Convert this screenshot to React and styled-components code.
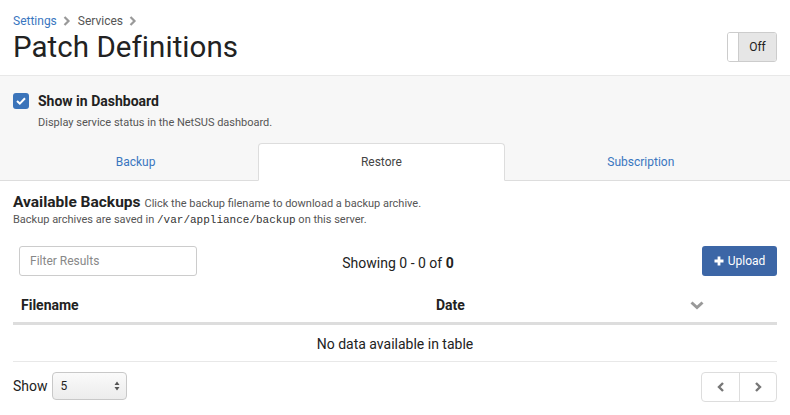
import React from "react";
import styled, { createGlobalStyle } from "styled-components";

const Global = createGlobalStyle`
  html, body { margin: 0; padding: 0; background: #fff; }
  body { font-family: Roboto, "Liberation Sans", Arial, sans-serif; color: #333; }
  * { box-sizing: border-box; }
`;

const Page = styled.div`
  width: 790px;
  height: 415px;
  overflow: hidden;
`;

const Header = styled.div`
  display: flex;
  align-items: flex-end;
  justify-content: space-between;
  padding: 14px 13px 11px 13px;
  height: 75px;
`;

const TitleBlock = styled.div`
  display: flex;
  flex-direction: column;
`;

const Crumbs = styled.div`
  display: flex;
  align-items: center;
  gap: 4px;
  font-size: 12px;
  line-height: 16px;
  color: #555;
`;

const CrumbLink = styled.span`
  color: ${(p) => (p.$link ? "#3a76bf" : "#555")};
`;

const Chev = styled.svg`
  width: 8px;
  height: 10px;
  margin: 0 3px 0 2px;
`;

const Title = styled.h1`
  margin: 1px 0 0 0;
  font-size: 29.5px;
  font-weight: 400;
  line-height: 34px;
  color: #222;
  letter-spacing: 0.05px;
`;

const Toggle = styled.div`
  display: flex;
  width: 50px;
  height: 30px;
  border: 1px solid #ccc;
  border-radius: 3px;
  overflow: hidden;
  margin-bottom: 2px;
`;

const ToggleKnob = styled.div`
  width: 11px;
  background: #fff;
  border-right: 1px solid #ccc;
`;

const ToggleLabel = styled.div`
  flex: 1;
  background: #e6e6e6;
  display: flex;
  align-items: center;
  justify-content: center;
  font-size: 12px;
  color: #222;
`;

const Panel = styled.div`
  background: #f7f7f7;
  border-top: 1px solid #e8e8e8;
  border-bottom: 1px solid #ddd;
  height: 106px;
  display: flex;
  flex-direction: column;
  justify-content: space-between;
`;

const Setting = styled.div`
  padding: 17px 13px 0 13px;
`;

const CheckRow = styled.div`
  display: flex;
  align-items: center;
  gap: 9px;
`;

const Check = styled.div`
  width: 16px;
  height: 16px;
  border-radius: 3px;
  background: #3b74ba;
  display: flex;
  align-items: center;
  justify-content: center;
`;

const CheckLabel = styled.span`
  font-size: 14px;
  font-weight: 700;
  color: #222;
`;

const Help = styled.div`
  margin: 7px 0 0 25px;
  font-size: 11px;
  color: #555;
`;

const Tabs = styled.div`
  display: flex;
  padding: 0 13px;
  margin-bottom: -1px;
`;

const Tab = styled.div`
  flex: 1 1 auto;
  height: 38px;
  display: flex;
  align-items: center;
  justify-content: center;
  font-size: 12px;
  padding: 0 15px;
  color: ${(p) => (p.$active ? "#444" : "#3a76bf")};
  background: ${(p) => (p.$active ? "#fff" : "transparent")};
  border: 1px solid ${(p) => (p.$active ? "#ddd" : "transparent")};
  border-bottom-color: ${(p) => (p.$active ? "#fff" : "transparent")};
  border-radius: 4px 4px 0 0;
`;

const Content = styled.div`
  padding: 13px 13px 0 13px;
`;

const Intro = styled.div`
  font-size: 11px;
  color: #555;
  line-height: 16px;
`;

const IntroTitle = styled.span`
  font-size: 15.5px;
  font-weight: 700;
  color: #222;
  margin-right: 4px;
`;

const Code = styled.code`
  font-family: "Liberation Mono", "DejaVu Sans Mono", monospace;
  font-size: 11px;
  color: #333;
`;

const Toolbar = styled.div`
  display: grid;
  grid-template-columns: 1fr auto 1fr;
  align-items: center;
  margin-top: 18px;
  padding-left: 6px;
`;

const Filter = styled.input`
  width: 178px;
  height: 30px;
  border: 1px solid #ccc;
  border-radius: 3px;
  padding: 0 10px;
  font-family: inherit;
  font-size: 12px;
  color: #333;
  &::placeholder { color: #888; }
`;

const Showing = styled.div`
  font-size: 14px;
  color: #222;
  padding-top: 3px;
`;

const UploadBtn = styled.button`
  justify-self: end;
  height: 30px;
  width: 75px;
  border: none;
  border-radius: 3px;
  background: #3c66a6;
  color: #fff;
  font-family: inherit;
  font-size: 12px;
  display: flex;
  align-items: center;
  justify-content: center;
  gap: 4px;
  padding: 0;
`;

const Table = styled.div`
  margin-top: 12px;
`;

const HeadRow = styled.div`
  display: flex;
  align-items: center;
  height: 37px;
  border-bottom: 3px solid #ddd;
  font-size: 14px;
  font-weight: 700;
  color: #222;
`;

const HeadCell = styled.div`
  width: ${(p) => p.$w};
  flex: ${(p) => (p.$grow ? 1 : "none")};
  padding: 0 8px;
  display: flex;
  align-items: center;
`;

const EmptyRow = styled.div`
  height: 37px;
  border-bottom: 1px solid #e8e8e8;
  display: flex;
  align-items: center;
  justify-content: center;
  font-size: 14px;
  color: #222;
  padding-top: 2px;
`;

const Footer = styled.div`
  display: flex;
  align-items: center;
  justify-content: space-between;
  margin-top: 8px;
`;

const ShowWrap = styled.div`
  display: flex;
  align-items: center;
  gap: 4px;
  font-size: 14px;
  color: #222;
`;

const Select = styled.div`
  width: 75px;
  height: 28px;
  border: 1px solid #c8c8c8;
  border-radius: 4px;
  background: linear-gradient(#fafafa, #ececec);
  display: flex;
  align-items: center;
  justify-content: space-between;
  padding: 0 6px 0 8px;
  font-size: 12px;
  color: #222;
`;

const Pager = styled.div`
  display: flex;
  border: 1px solid #ddd;
  border-radius: 4px;
  height: 30px;
  margin-top: 2px;
`;

const PageBtn = styled.div`
  width: 37px;
  display: flex;
  align-items: center;
  justify-content: center;
  & + & { border-left: 1px solid #ddd; }
`;

const ChevronRight = () => (
  <Chev viewBox="0 0 8 10">
    <path d="M1.5 1 L5.5 5 L1.5 9" fill="none" stroke="#999" strokeWidth="2.2" />
  </Chev>
);

export default function App() {
  return (
    <Page>
      <Global />
      <Header>
        <TitleBlock>
          <Crumbs>
            <CrumbLink $link>Settings</CrumbLink>
            <ChevronRight />
            <CrumbLink>Services</CrumbLink>
            <ChevronRight />
          </Crumbs>
          <Title>Patch Definitions</Title>
        </TitleBlock>
        <Toggle>
          <ToggleKnob />
          <ToggleLabel>Off</ToggleLabel>
        </Toggle>
      </Header>
      <Panel>
        <Setting>
          <CheckRow>
            <Check>
              <svg width="10" height="8" viewBox="0 0 10 8">
                <path d="M1 4 L3.8 6.6 L9 1.2" fill="none" stroke="#fff" strokeWidth="2" />
              </svg>
            </Check>
            <CheckLabel>Show in Dashboard</CheckLabel>
          </CheckRow>
          <Help>Display service status in the NetSUS dashboard.</Help>
        </Setting>
        <Tabs>
          <Tab>Backup</Tab>
          <Tab $active>Restore</Tab>
          <Tab>Subscription</Tab>
        </Tabs>
      </Panel>
      <Content>
        <Intro>
          <IntroTitle>Available Backups</IntroTitle>
          Click the backup filename to download a backup archive.
          <br />
          Backup archives are saved in <Code>/var/appliance/backup</Code> on this server.
        </Intro>
        <Toolbar>
          <Filter placeholder="Filter Results" />
          <Showing>
            Showing 0 - 0 of <b>0</b>
          </Showing>
          <UploadBtn>
            <svg width="10" height="10" viewBox="0 0 10 10">
              <path d="M5 0.5 V9.5 M0.5 5 H9.5" stroke="#fff" strokeWidth="2.8" />
            </svg>
            Upload
          </UploadBtn>
        </Toolbar>
        <Table>
          <HeadRow>
            <HeadCell $w="415px">Filename</HeadCell>
            <HeadCell $w="254px">Date</HeadCell>
            <HeadCell $grow>
              <svg width="14" height="9" viewBox="0 0 14 9">
                <path d="M1.5 1.5 L7 6.5 L12.5 1.5" fill="none" stroke="#999" strokeWidth="3" />
              </svg>
            </HeadCell>
          </HeadRow>
          <EmptyRow>No data available in table</EmptyRow>
        </Table>
        <Footer>
          <ShowWrap>
            Show
            <Select>
              <span>5</span>
              <svg width="6" height="10" viewBox="0 0 6 10">
                <path d="M3 0.5 L5.5 4 H0.5 Z M3 9.5 L5.5 6 H0.5 Z" fill="#555" />
              </svg>
            </Select>
          </ShowWrap>
          <Pager>
            <PageBtn>
              <svg width="8" height="10" viewBox="0 0 8 10">
                <path d="M6 1 L2 5 L6 9" fill="none" stroke="#777" strokeWidth="2.4" />
              </svg>
            </PageBtn>
            <PageBtn>
              <svg width="8" height="10" viewBox="0 0 8 10">
                <path d="M2 1 L6 5 L2 9" fill="none" stroke="#777" strokeWidth="2.4" />
              </svg>
            </PageBtn>
          </Pager>
        </Footer>
      </Content>
    </Page>
  );
}
